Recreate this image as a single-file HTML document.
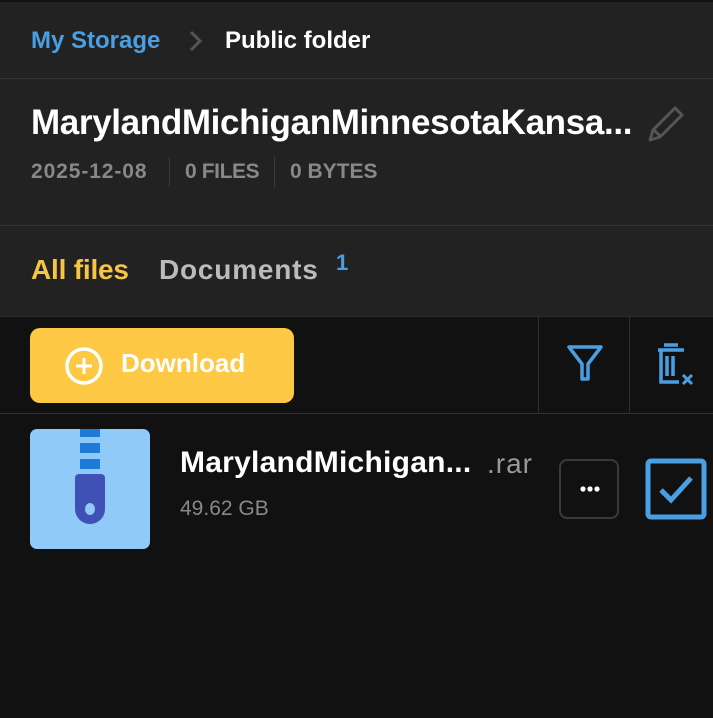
<!DOCTYPE html>
<html><head><meta charset="utf-8"><style>
*{margin:0;padding:0;box-sizing:border-box}
body{width:713px;height:718px;background:#111;font-family:"Liberation Sans",sans-serif;position:relative;overflow:hidden}
.top{position:absolute;left:0;top:0;width:713px;height:316px;background:#222;border-top:2px solid #121212}
.a{position:absolute;white-space:nowrap}
.hl{position:absolute;left:0;width:713px;height:1px;background:#353535}
</style></head><body>
<div class="top"></div>
<div class="a" style="left:31px;top:27px;font-size:24px;color:#4a9fe3;font-weight:bold">My Storage</div>
<svg class="a" style="left:188px;top:30px" width="16" height="22"><path d="M3 2l9 9-9 9" stroke="#555" stroke-width="3" fill="none"/></svg>
<div class="a" style="left:225px;top:27px;font-size:24px;color:#fff;font-weight:bold">Public folder</div>
<div class="hl" style="top:78px"></div>
<div class="a" style="left:31px;top:103px;font-size:35px;color:#fff;font-weight:bold;letter-spacing:-0.35px">MarylandMichiganMinnesotaKansa...</div>
<svg class="a" style="left:646px;top:104px" width="42" height="40"><path d="M4 36l3-10 22-22 7 7-22 22z M8 26l7 7" stroke="#555" stroke-width="3" fill="none" stroke-linejoin="round"/></svg>
<div class="a" style="left:31px;top:160px;font-size:21px;color:#888;font-weight:bold;letter-spacing:0.9px">2025-12-08</div>
<div class="a" style="left:169px;top:157px;width:1px;height:30px;background:#3a3a3a"></div>
<div class="a" style="left:185px;top:160px;font-size:21px;color:#888;font-weight:bold;letter-spacing:-0.4px">0 FILES</div>
<div class="a" style="left:274px;top:157px;width:1px;height:30px;background:#3a3a3a"></div>
<div class="a" style="left:290px;top:160px;font-size:21px;color:#888;font-weight:bold">0 BYTES</div>
<div class="hl" style="top:225px"></div>
<div class="a" style="left:31px;top:254px;font-size:28px;color:#f7c443;font-weight:bold;letter-spacing:-0.2px">All files</div>
<div class="a" style="left:159px;top:254px;font-size:28px;color:#bbb;font-weight:bold;letter-spacing:0.8px">Documents</div>
<div class="a" style="left:336px;top:250px;font-size:22px;color:#4a9fe3;font-weight:bold">1</div>
<div class="hl" style="top:316px;background:#2a2a2a"></div>
<div class="a" style="left:30px;top:328px;width:264px;height:75px;background:#fdc843;border-radius:10px"></div>
<svg class="a" style="left:64px;top:346px" width="40" height="40"><circle cx="20" cy="20" r="17" stroke="#fff" stroke-width="3.5" fill="none"/><path d="M20 12v16M12 20h16" stroke="#fff" stroke-width="3"/></svg>
<div class="a" style="left:121px;top:348px;font-size:26px;color:#fff;font-weight:bold">Download</div>
<div class="a" style="left:538px;top:317px;width:1px;height:96px;background:#2e2e2e"></div>
<div class="a" style="left:629px;top:317px;width:1px;height:96px;background:#2e2e2e"></div>
<svg class="a" style="left:566px;top:344px" width="38" height="38"><path d="M3 3h32L22 20v15h-6V20z" stroke="#4a9fe3" stroke-width="3.5" fill="none" stroke-linejoin="round"/></svg>
<svg class="a" style="left:656px;top:342px" width="42" height="46"><path d="M8 3h14M2 8h26M5 8v32h18M11 14v20M17 14v20" stroke="#4a9fe3" stroke-width="3.5" fill="none"/><path d="M27 33l9 9M36 33l-9 9" stroke="#4a9fe3" stroke-width="3"/></svg>
<div class="hl" style="top:413px;background:#333"></div>
<div class="a" style="left:30px;top:429px;width:120px;height:120px;background:#90caf9;border-radius:7px"></div>
<div class="a" style="left:80px;top:429px;width:20px;height:8px;background:#1e7ad8"></div>
<div class="a" style="left:80px;top:443px;width:20px;height:10px;background:#1e7ad8"></div>
<div class="a" style="left:80px;top:459px;width:20px;height:10px;background:#1e7ad8"></div>
<div class="a" style="left:75px;top:474px;width:30px;height:50px;background:#3f51b5;border-radius:4px 4px 15px 15px"></div>
<div class="a" style="left:85px;top:503px;width:10px;height:12px;background:#90caf9;border-radius:50%"></div>
<div class="a" style="left:180px;top:446px;font-size:30px;color:#fff;font-weight:bold;letter-spacing:0.25px">MarylandMichigan...</div>
<div class="a" style="left:487px;top:448px;font-size:28px;color:#999;letter-spacing:1px">.rar</div>
<div class="a" style="left:180px;top:497px;font-size:21px;color:#888">49.62 GB</div>
<div class="a" style="left:559px;top:459px;width:60px;height:60px;border:2px solid #3a3a3a;border-radius:8px"></div>
<svg class="a" style="left:579px;top:485px" width="22" height="8"><circle cx="4" cy="4" r="2.6" fill="#fff"/><circle cx="11" cy="4" r="2.6" fill="#fff"/><circle cx="18" cy="4" r="2.6" fill="#fff"/></svg>
<svg class="a" style="left:645px;top:458px" width="62" height="62"><rect x="3" y="3" width="56" height="56" rx="3" stroke="#4a9fe3" stroke-width="5" fill="none"/><path d="M16 32l10 10 20-22" stroke="#4a9fe3" stroke-width="5" fill="none"/></svg>
</body></html>
